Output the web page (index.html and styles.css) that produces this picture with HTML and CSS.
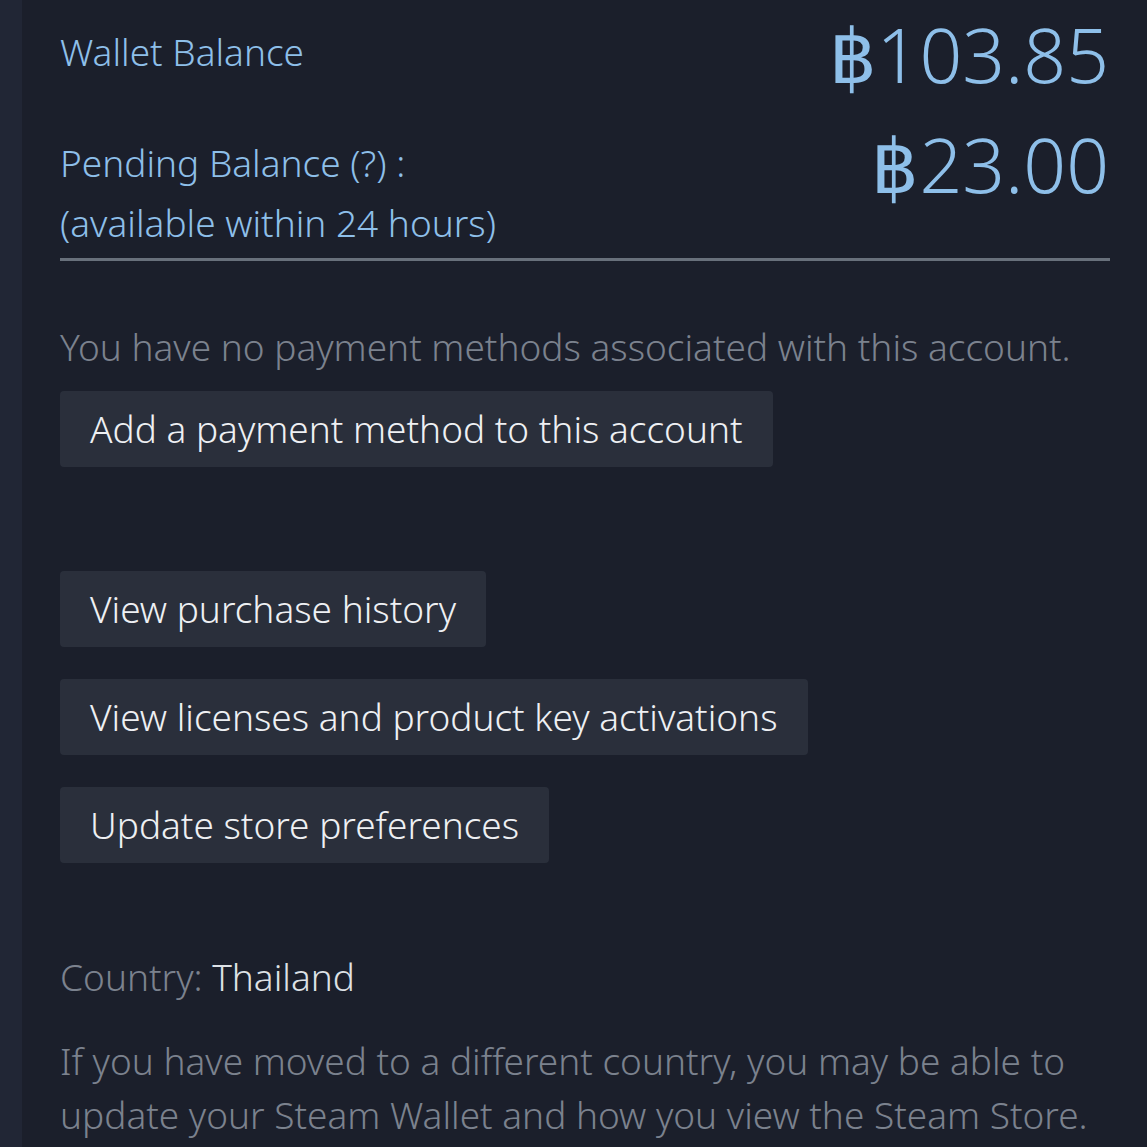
FILE: index.html
```html
<!DOCTYPE html>
<html lang="en">
<head>
<meta charset="utf-8">
<title>Account details</title>
<link rel="stylesheet" href="styles.css">
</head>
<body>
<main class="panel">
  <section class="balances">
    <div class="row wallet-row">
      <div class="label wallet-label">Wallet Balance</div>
      <div class="amount wallet-amount">฿103.85</div>
    </div>
    <div class="row pending-row">
      <div class="label pending-label">
        <div>Pending Balance (?) :</div>
        <div>(available within 24 hours)</div>
      </div>
      <div class="amount">฿23.00</div>
    </div>
  </section>

  <section class="payment">
    <p class="muted">You have no payment methods associated with this account.</p>
    <a class="btn" href="#">Add a payment method to this account</a>
  </section>

  <section class="actions">
    <a class="btn" href="#">View purchase history</a>
    <a class="btn" href="#">View licenses and product key activations</a>
    <a class="btn" href="#">Update store preferences</a>
  </section>

  <section class="country">
    <p class="muted country-line">Country: <span class="country-name">Thailand</span></p>
    <p class="muted note">If you have moved to a different country, you may be able to<br>update your Steam Wallet and how you view the Steam Store.</p>
  </section>
</main>
</body>
</html>
```
FILE: styles.css
```css
html, body {
  margin: 0;
  padding: 0;
}
body {
  background: #212635;
  font-family: "Noto Sans", "Open Sans", sans-serif;
  font-weight: 300;
  font-size: 37px;
  line-height: 54px;
  overflow: hidden;
}
.panel {
  margin-left: 22px;
  min-height: 1147px;
  background: #1b1f2b;
  padding: 0 37px 0 38px;
  box-sizing: border-box;
}
.balances {
  border-bottom: 3px solid #68707b;
  padding-bottom: 5px;
}
.row {
  display: flex;
  justify-content: space-between;
  align-items: flex-start;
}
.label {
  color: #8ebfe9;
}
.wallet-label {
  margin-top: 25px;
}
.amount {
  color: #8ebfe9;
  font-size: 75px;
  line-height: 74px;
  margin-right: 1px;
}
.wallet-amount {
  margin-top: 17px;
}
.pending-row {
  margin-top: 36px;
}
.pending-label {
  margin-top: 6px;
  line-height: 60px;
}
.muted {
  color: #7b828e;
  margin: 0;
}
.payment {
  display: flex;
  flex-direction: column;
  align-items: flex-start;
  padding-top: 59px;
  gap: 17px;
}
.btn {
  display: inline-block;
  background: #2a2f3b;
  color: #eef0f3;
  text-decoration: none;
  height: 76px;
  line-height: 76px;
  padding: 0 30px;
  border-radius: 4px;
  white-space: nowrap;
}
.actions {
  display: flex;
  flex-direction: column;
  align-items: flex-start;
  gap: 32px;
  margin-top: 104px;
}
.country {
  margin-top: 87px;
}
.country-name {
  color: #dde1e6;
}
.note {
  margin-top: 30px;
}
```
